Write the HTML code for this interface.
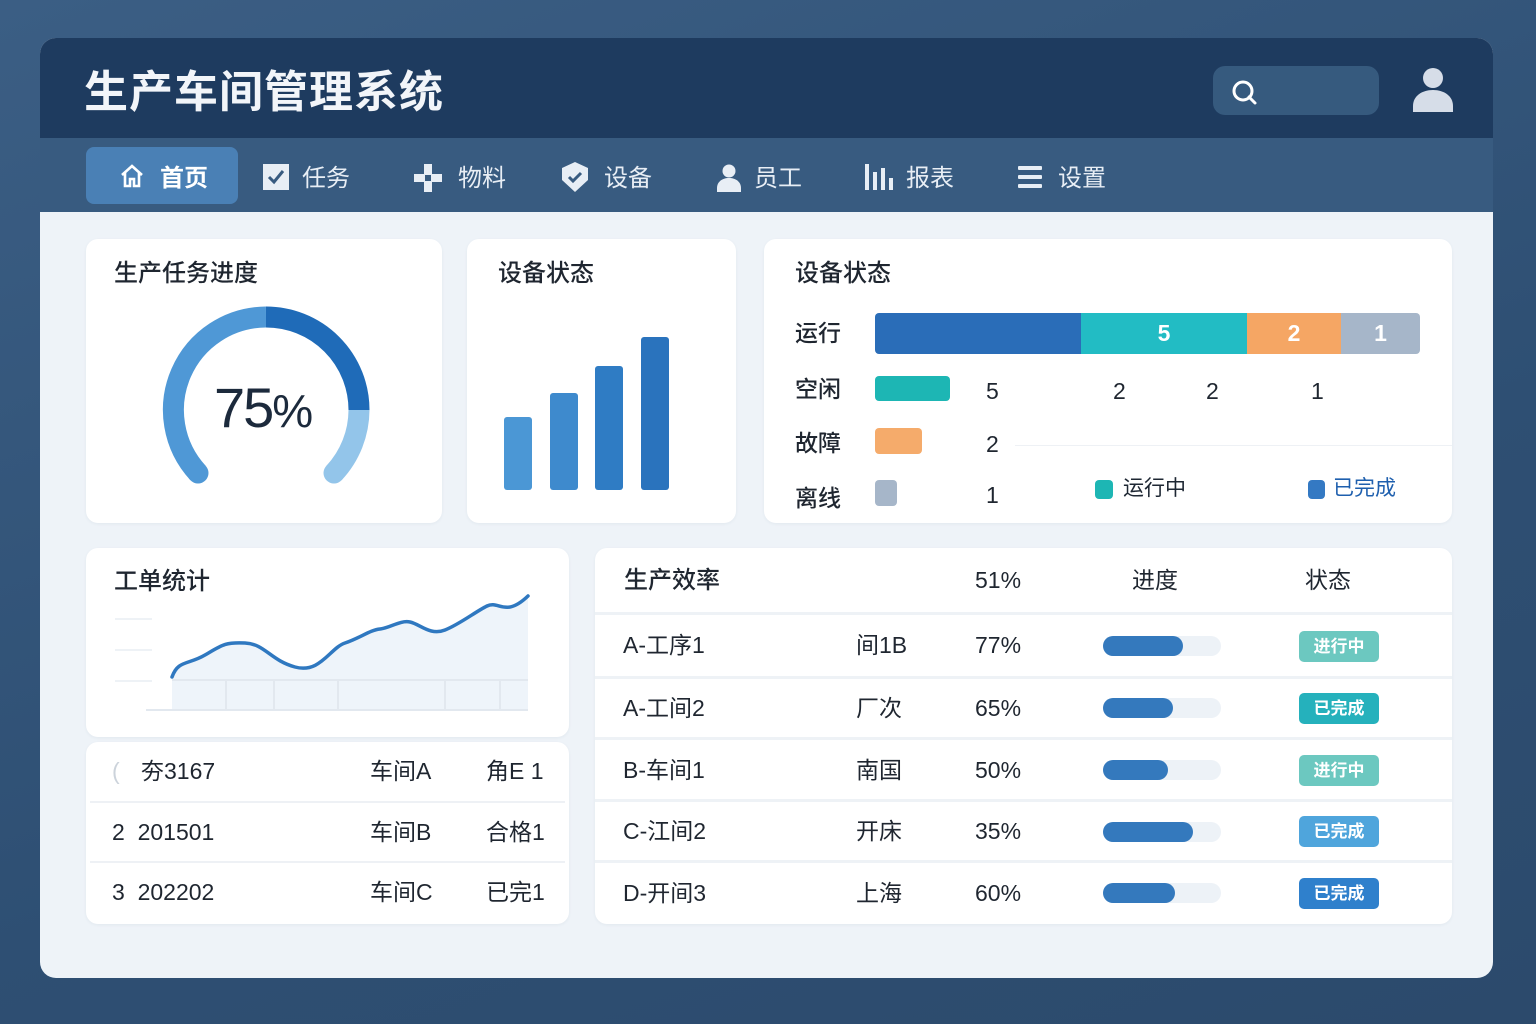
<!DOCTYPE html>
<html><head><meta charset="utf-8"><style>
*{margin:0;padding:0;box-sizing:border-box}
body{width:1536px;height:1024px;overflow:hidden;background:linear-gradient(160deg,#3b5e84,#2e4f73 60%,#2c4a6c);font-family:"Liberation Sans","Noto Sans CJK SC",sans-serif;position:relative;color:#1e2733}
.a{position:absolute}
.card{position:absolute;background:#fff;border-radius:12px;box-shadow:0 1px 3px rgba(30,60,100,.06)}
.t{position:absolute;white-space:nowrap;line-height:1.15}
.nav .t{color:#e8eef5;font-size:24px;top:165px}
.h{font-size:24px;font-weight:500;color:#1f2630}
.r{font-size:23px;color:#1f2630}
.badge{position:absolute;width:80px;height:31px;border-radius:5px;color:#fff;font-size:17px;font-weight:bold;text-align:center;line-height:31px;left:1299px}
.pb{position:absolute;left:1103px;width:118px;height:20px;border-radius:10px;background:#edf2f7}
.pb i{display:block;height:20px;border-radius:10px;background:#3479bd}
</style></head><body>
<div class="a" style="left:40px;top:38px;width:1453px;height:940px;border-radius:16px;background:#eef3f8;overflow:hidden">
 <div class="a" style="left:0;top:0;width:1453px;height:100px;background:#1e3b5f"></div>
 <div class="a" style="left:0;top:100px;width:1453px;height:74px;background:#385b80"></div>
</div>
<div class="t" style="left:84px;top:68px;font-size:44px;font-weight:bold;color:#f2f5f9;letter-spacing:1px">生产车间管理系统</div>
<div class="a" style="left:1213px;top:66px;width:166px;height:49px;border-radius:12px;background:#365a7e"></div>
<svg class="a" style="left:1228px;top:76px" width="32" height="32" viewBox="0 0 32 32"><circle cx="15" cy="15" r="9" fill="none" stroke="#fff" stroke-width="3"/><path d="M21 21l6 6" stroke="#fff" stroke-width="3" stroke-linecap="round"/></svg>
<svg class="a" style="left:1412px;top:66px" width="42" height="46" viewBox="0 0 42 46"><circle cx="21" cy="12" r="10" fill="#d6dde8"/><path d="M1 46v-6c0-10 9-16 20-16s20 6 20 16v6z" fill="#d6dde8"/></svg>
<div class="nav">
 <div class="a" style="left:86px;top:147px;width:152px;height:57px;border-radius:8px;background:#4a80b5"></div>
 <svg class="a" style="left:118px;top:162px" width="28" height="28" viewBox="0 0 28 28"><path d="M4 13L14 4l10 9M7 11v13h5v-7h4v7h5V11" fill="none" stroke="#fff" stroke-width="2.6"/></svg>
 <div class="t" style="left:160px;font-weight:bold;color:#fff">首页</div>
 <svg class="a" style="left:263px;top:164px" width="26" height="26"><rect width="26" height="26" fill="#e8eef5"/><path d="M6 13l5 5 9-11" fill="none" stroke="#385b80" stroke-width="3"/></svg>
 <div class="t" style="left:302px">任务</div>
 <svg class="a" style="left:414px;top:164px" width="28" height="28"><path d="M10 0h8v10h10v8H18v10h-8V18H0v-8h10z" fill="#e8eef5"/><rect x="11" y="11" width="6" height="6" fill="#385b80"/></svg>
 <div class="t" style="left:458px">物料</div>
 <svg class="a" style="left:562px;top:162px" width="26" height="30"><path d="M13 0l13 6v12L13 30 0 18V6z" fill="#e8eef5"/><path d="M7 15l4 4 8-8" fill="none" stroke="#385b80" stroke-width="3"/></svg>
 <div class="t" style="left:604px">设备</div>
 <svg class="a" style="left:716px;top:164px" width="26" height="28"><circle cx="13" cy="7" r="6.5" fill="#e8eef5"/><path d="M1 28v-4c0-6 5-10 12-10s12 4 12 10v4z" fill="#e8eef5"/></svg>
 <div class="t" style="left:754px">员工</div>
 <svg class="a" style="left:864px;top:164px" width="30" height="26"><rect x="1" y="0" width="4" height="26" fill="#e8eef5"/><rect x="9" y="8" width="4" height="18" fill="#e8eef5"/><rect x="17" y="4" width="4" height="22" fill="#e8eef5"/><rect x="25" y="14" width="4" height="12" fill="#e8eef5"/></svg>
 <div class="t" style="left:906px">报表</div>
 <svg class="a" style="left:1018px;top:165px" width="24" height="24"><rect y="1" width="24" height="4" rx="1" fill="#e8eef5"/><rect y="10" width="24" height="4" rx="1" fill="#e8eef5"/><rect y="19" width="24" height="4" rx="1" fill="#e8eef5"/></svg>
 <div class="t" style="left:1058px">设置</div>
</div>

<div class="card" style="left:86px;top:239px;width:356px;height:284px"></div>
<div class="t h" style="left:114px;top:260px">生产任务进度</div>
<svg class="a" style="left:0;top:0" width="760" height="540">
 <g fill="none" stroke-width="21">
 <path d="M198 473A93 93 0 0 1 266 317" stroke="#4f98d6"/>
 <path d="M266 317A93 93 0 0 1 359 410" stroke="#1f6bb8"/>
 <path d="M359 410A93 93 0 0 1 334 473" stroke="#93c5ea"/>
 </g>
 <circle cx="198" cy="473" r="10.5" fill="#4f98d6"/>
 <circle cx="334" cy="473" r="10.5" fill="#93c5ea"/>
 <g stroke="#eef2f6" stroke-width="2"><line x1="498" y1="314" x2="714" y2="314"/><line x1="498" y1="359" x2="714" y2="359"/><line x1="498" y1="403" x2="714" y2="403"/><line x1="498" y1="447" x2="714" y2="447"/><line x1="498" y1="490" x2="714" y2="490"/></g>
</svg>
<div class="t" style="left:214px;top:376px;font-size:56px;font-weight:500;color:#1c2a3c;letter-spacing:-2px">75<span style="font-size:46px">%</span></div>

<div class="card" style="left:467px;top:239px;width:269px;height:284px"></div>
<div class="t h" style="left:498px;top:260px">设备状态</div>
<div class="a" style="left:504px;top:417px;width:28px;height:73px;background:#4b97d5;border-radius:3px"></div>
<div class="a" style="left:550px;top:393px;width:28px;height:97px;background:#3e8acd;border-radius:3px"></div>
<div class="a" style="left:595px;top:366px;width:28px;height:124px;background:#2f7cc4;border-radius:3px"></div>
<div class="a" style="left:641px;top:337px;width:28px;height:153px;background:#2a73bd;border-radius:3px"></div>

<div class="card" style="left:764px;top:239px;width:688px;height:284px"></div>
<div class="t h" style="left:795px;top:260px">设备状态</div>
<div class="t r" style="left:795px;top:320px;font-weight:500">运行</div>
<div class="t r" style="left:795px;top:376px;font-weight:500">空闲</div>
<div class="t r" style="left:795px;top:430px;font-weight:500">故障</div>
<div class="t r" style="left:795px;top:485px;font-weight:500">离线</div>
<div class="a" style="left:875px;top:313px;width:545px;height:41px;border-radius:4px;overflow:hidden;display:flex;color:#fff;font-size:23px;font-weight:bold;line-height:41px">
 <div style="width:206px;background:#2a6db8"></div>
 <div style="width:166px;background:#22bcc4;text-align:center">5</div>
 <div style="width:94px;background:#f5a664;text-align:center">2</div>
 <div style="width:79px;background:#a6b6c9;text-align:center">1</div>
</div>
<div class="a" style="left:875px;top:376px;width:75px;height:25px;border-radius:4px;background:#1db6b4"></div>
<div class="a" style="left:875px;top:428px;width:47px;height:26px;border-radius:4px;background:#f5ab6b"></div>
<div class="a" style="left:875px;top:480px;width:22px;height:26px;border-radius:4px;background:#a6b6c9"></div>
<div class="a" style="left:1015px;top:445px;width:437px;height:1px;background:#eef1f5"></div>
<div class="t r" style="left:986px;top:378px">5</div>
<div class="t r" style="left:1113px;top:378px">2</div>
<div class="t r" style="left:1206px;top:378px">2</div>
<div class="t r" style="left:1311px;top:378px">1</div>
<div class="t r" style="left:986px;top:431px">2</div>
<div class="t r" style="left:986px;top:482px">1</div>
<div class="a" style="left:1095px;top:480px;width:18px;height:19px;border-radius:4px;background:#1db6b4"></div>
<div class="t" style="left:1123px;top:477px;font-size:21px">运行中</div>
<div class="a" style="left:1308px;top:480px;width:17px;height:19px;border-radius:4px;background:#3479c3"></div>
<div class="t" style="left:1333px;top:477px;font-size:21px;color:#1e5fae">已完成</div>

<div class="card" style="left:86px;top:548px;width:483px;height:189px"></div>
<div class="t h" style="left:114px;top:568px">工单统计</div>
<svg class="a" style="left:0;top:0" width="600" height="740">
 <g stroke="#eef2f6" stroke-width="2"><line x1="115" y1="619" x2="152" y2="619"/><line x1="115" y1="650" x2="152" y2="650"/><line x1="115" y1="681" x2="152" y2="681"/></g>
 <path d="M172 677C178 660 188 665 205 655S225 642 245 643S270 660 295 667S330 648 345 643S370 630 380 629S400 620 410 622S430 636 445 630S475 612 487 606S505 618 528 596V710H172Z" fill="#eef4fa"/>
 <g stroke="#e2e8ef" stroke-width="2"><line x1="172" y1="680" x2="528" y2="680"/><line x1="146" y1="710" x2="528" y2="710"/><line x1="226" y1="680" x2="226" y2="710"/><line x1="274" y1="680" x2="274" y2="710"/><line x1="338" y1="680" x2="338" y2="710"/><line x1="445" y1="680" x2="445" y2="710"/><line x1="500" y1="680" x2="500" y2="710"/></g>
 <path d="M172 677C178 660 188 665 205 655S225 642 245 643S270 660 295 667S330 648 345 643S370 630 380 629S400 620 410 622S430 636 445 630S475 612 487 606S505 618 528 596" fill="none" stroke="#2f78c0" stroke-width="3.5" stroke-linecap="round"/>
</svg>
<div class="card" style="left:86px;top:742px;width:483px;height:182px"></div>
<div class="a" style="left:90px;top:801px;width:475px;height:2px;background:#eef1f5"></div>
<div class="a" style="left:90px;top:861px;width:475px;height:2px;background:#eef1f5"></div>
<div class="t r" style="left:112px;top:758px;color:#ccd3db">(</div>
<div class="t r" style="left:141px;top:758px">夯3167</div>
<div class="t r" style="left:370px;top:758px">车间A</div>
<div class="t r" style="left:486px;top:758px">角E 1</div>
<div class="t r" style="left:112px;top:819px">2&nbsp; 201501</div>
<div class="t r" style="left:370px;top:819px">车间B</div>
<div class="t r" style="left:486px;top:819px">合格1</div>
<div class="t r" style="left:112px;top:879px">3&nbsp; 202202</div>
<div class="t r" style="left:370px;top:879px">车间C</div>
<div class="t r" style="left:486px;top:879px">已完1</div>

<div class="card" style="left:595px;top:548px;width:857px;height:376px"></div>
<div class="a" style="left:595px;top:612px;width:857px;height:3px;background:#eef2f6"></div>
<div class="a" style="left:595px;top:676px;width:857px;height:3px;background:#eef2f6"></div>
<div class="a" style="left:595px;top:737px;width:857px;height:3px;background:#eef2f6"></div>
<div class="a" style="left:595px;top:799px;width:857px;height:3px;background:#eef2f6"></div>
<div class="a" style="left:595px;top:860px;width:857px;height:3px;background:#eef2f6"></div>
<div class="t h" style="left:624px;top:567px">生产效率</div>
<div class="t r" style="left:975px;top:567px">51%</div>
<div class="t r" style="left:1132px;top:567px">进度</div>
<div class="t r" style="left:1305px;top:567px">状态</div>

<div class="t r" style="left:623px;top:632px">A-工序1</div><div class="t r" style="left:856px;top:632px">间1B</div><div class="t r" style="left:975px;top:632px">77%</div>
<div class="pb" style="top:636px"><i style="width:80px"></i></div><div class="badge" style="top:631px;background:#6cc8c0">进行中</div>
<div class="t r" style="left:623px;top:695px">A-工间2</div><div class="t r" style="left:856px;top:695px">厂次</div><div class="t r" style="left:975px;top:695px">65%</div>
<div class="pb" style="top:698px"><i style="width:70px"></i></div><div class="badge" style="top:693px;background:#25b1bc">已完成</div>
<div class="t r" style="left:623px;top:757px">B-车间1</div><div class="t r" style="left:856px;top:757px">南国</div><div class="t r" style="left:975px;top:757px">50%</div>
<div class="pb" style="top:760px"><i style="width:65px"></i></div><div class="badge" style="top:755px;background:#6cc8c0">进行中</div>
<div class="t r" style="left:623px;top:818px">C-江间2</div><div class="t r" style="left:856px;top:818px">开床</div><div class="t r" style="left:975px;top:818px">35%</div>
<div class="pb" style="top:822px"><i style="width:90px"></i></div><div class="badge" style="top:816px;background:#4fa5dc">已完成</div>
<div class="t r" style="left:623px;top:880px">D-开间3</div><div class="t r" style="left:856px;top:880px">上海</div><div class="t r" style="left:975px;top:880px">60%</div>
<div class="pb" style="top:883px"><i style="width:72px"></i></div><div class="badge" style="top:878px;background:#2f80cc">已完成</div>
</body></html>
